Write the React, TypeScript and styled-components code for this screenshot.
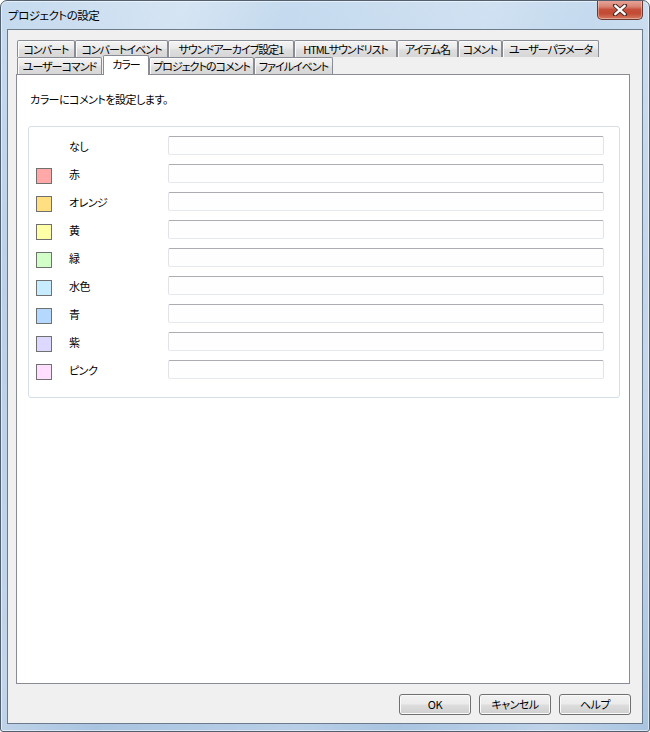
import React from "react";
import styled, { createGlobalStyle } from "styled-components";

const GlobalStyle = createGlobalStyle`
  html, body { margin: 0; padding: 0; background: #ffffff; }
  body {
    font-family: "Noto Sans CJK JP", "Noto Sans", sans-serif;
    font-size: 11px;
    letter-spacing: -0.5px;
    color: #000;
    font-feature-settings: "palt";
  }
  * { box-sizing: border-box; }
`;

const Window = styled.div`
  width: 650px;
  height: 732px;
  border: 1px solid #52606f;
  border-radius: 7px 7px 3px 3px;
  background:
    linear-gradient(105deg, rgba(255,255,255,0) 0%, rgba(255,255,255,0.28) 22%, rgba(255,255,255,0) 34%, rgba(255,255,255,0.18) 58%, rgba(255,255,255,0) 70%, rgba(255,255,255,0.25) 88%, rgba(255,255,255,0) 100%),
    linear-gradient(#c6dbef, #b2cbe6 40%, #a9c4e1);
  box-shadow: inset 0 0 0 1px rgba(255,255,255,0.55);
  display: flex;
  flex-direction: column;
  overflow: hidden;
`;

const TitleBar = styled.div`
  height: 28px;
  display: flex;
  align-items: flex-start;
  justify-content: space-between;
  padding: 0 6px 0 7px;
`;

const Title = styled.div`
  margin-top: 6px;
  font-size: 11.5px;
  line-height: 16px;
  color: #000;
`;

const CloseButton = styled.div`
  width: 46px;
  height: 20px;
  margin-top: -1px;
  border: 1px solid #6b3a33;
  border-top: none;
  border-radius: 0 0 5px 5px;
  background: linear-gradient(#e9a99c 0%, #d88373 35%, #c6503c 50%, #c24a34 70%, #d77a60 100%);
  box-shadow: inset 0 0 0 1px rgba(255,255,255,0.35);
  display: flex;
  align-items: center;
  justify-content: center;
`;

const Client = styled.div`
  flex: 1;
  margin: 0 6px 7px 6px;
  border: 1px solid #6c7b8c;
  background: #f0f0f0;
  display: flex;
  flex-direction: column;
  padding: 10px 11px 8px 8px;
`;

const TabHeader = styled.div`
  display: flex;
  flex-direction: column;
  padding-left: 1px;
  margin-right: 1px;
`;

const TabRow = styled.div`
  display: flex;
  align-items: flex-end;
  height: 17px;
`;

const Tab = styled.div<{ $w: number; $active?: boolean; $gap?: number }>`
  width: ${(p) => p.$w}px;
  margin-left: ${(p) => p.$gap ?? 0}px;
  height: ${(p) => (p.$active ? 20 : 17)}px;
  margin-bottom: ${(p) => (p.$active ? -1 : 0)}px;
  position: relative;
  z-index: ${(p) => (p.$active ? 2 : 0)};
  border: 1px solid #898c95;
  border-bottom: none;
  border-radius: 2px 2px 0 0;
  background: ${(p) =>
    p.$active
      ? "#ffffff"
      : "linear-gradient(#f4f4f4, #eaeaea 45%, #dedede 55%, #d6d6d6)"};
  box-shadow: ${(p) => (p.$active ? "none" : "inset 1px 1px 0 #fbfbfb")};
  display: flex;
  justify-content: center;
  align-items: ${(p) => (p.$active ? "flex-start" : "center")};
  padding-top: ${(p) => (p.$active ? 1 : 0)}px;
  font-size: 11px;
  letter-spacing: -1px;
  line-height: 15px;
  white-space: nowrap;
  overflow: hidden;
  color: #000;
`;

const Pane = styled.div`
  flex: 1;
  margin-right: 1px;
  background: #ffffff;
  border: 1px solid #898c95;
  display: flex;
  flex-direction: column;
  padding: 16px 9px 0 11px;
`;

const Description = styled.div`
  padding-left: 2px;
  line-height: 16px;
  margin-bottom: 19px;
`;

const Group = styled.div`
  border: 1px solid #d5dfe5;
  border-radius: 3px;
  padding: 9px 15px 18px 7px;
  display: flex;
  flex-direction: column;
  gap: 9px;
`;

const ColorRow = styled.div`
  display: flex;
  align-items: center;
  height: 19px;
`;

const Swatch = styled.span<{ $color?: string }>`
  width: 16px;
  height: 16px;
  flex: none;
  align-self: flex-start;
  margin-top: 4px;
  margin-right: 17px;
  background: ${(p) => p.$color ?? "transparent"};
  border: 1px solid ${(p) => (p.$color ? "#707070" : "transparent")};
`;

const Label = styled.span`
  width: 99px;
  flex: none;
  line-height: 16px;
`;

const TextBox = styled.input`
  flex: 1;
  height: 19px;
  min-width: 0;
  border: 1px solid #e2e3ea;
  border-top-color: #abadb3;
  border-bottom-color: #e3e9ef;
  border-radius: 2px;
  background: #fefefe;
  outline: none;
  padding: 0 3px;
  font: inherit;
`;

const ButtonBar = styled.div`
  display: flex;
  justify-content: flex-end;
  gap: 8px;
  margin-top: 10px;
`;

const Button = styled.button`
  width: 72px;
  height: 21px;
  padding: 0;
  border: 1px solid #707070;
  border-radius: 3px;
  background: linear-gradient(#f2f2f2 0%, #ebebeb 48%, #dddddd 52%, #cfcfcf 100%);
  box-shadow: inset 0 0 0 1px #fafafa;
  font-family: "Noto Sans CJK JP", "Noto Sans", sans-serif;
  font-size: 11px;
  letter-spacing: -0.5px;
  font-feature-settings: "palt";
  color: #000;
  line-height: 17px;
`;

const row1 = [
  { t: "コンバート", w: 58 },
  { t: "コンバートイベント", w: 93 },
  { t: "サウンドアーカイブ設定1", w: 126 },
  { t: "HTMLサウンドリスト", w: 103 },
  { t: "アイテム名", w: 61 },
  { t: "コメント", w: 44 },
  { t: "ユーザーパラメータ", w: 97 },
];

const row2 = [
  { t: "ユーザーコマンド", w: 85, gap: 0 },
  { t: "カラー", w: 46, gap: 1, active: true },
  { t: "プロジェクトのコメント", w: 105, gap: 0 },
  { t: "ファイルイベント", w: 79, gap: 0 },
];

const colors: { name: string; color?: string }[] = [
  { name: "なし" },
  { name: "赤", color: "#ffa8a8" },
  { name: "オレンジ", color: "#ffdf80" },
  { name: "黄", color: "#ffffa8" },
  { name: "緑", color: "#d2ffc8" },
  { name: "水色", color: "#c8ecff" },
  { name: "青", color: "#b4d8ff" },
  { name: "紫", color: "#dcd8ff" },
  { name: "ピンク", color: "#ffdeff" },
];

export default function App() {
  return (
    <>
      <GlobalStyle />
      <Window>
        <TitleBar>
          <Title>プロジェクトの設定</Title>
          <CloseButton>
            <svg width="16" height="12" viewBox="0 0 16 12">
              <path d="M3 1.5 L13 10.5 M13 1.5 L3 10.5" stroke="#4a2a26" strokeWidth="4.2" strokeLinecap="round" />
              <path d="M3.3 1.8 L12.7 10.2 M12.7 1.8 L3.3 10.2" stroke="#ffffff" strokeWidth="2.4" strokeLinecap="round" />
            </svg>
          </CloseButton>
        </TitleBar>
        <Client>
          <TabHeader>
            <TabRow>
              {row1.map((t) => (
                <Tab key={t.t} $w={t.w}>
                  {t.t}
                </Tab>
              ))}
            </TabRow>
            <TabRow>
              {row2.map((t) => (
                <Tab key={t.t} $w={t.w} $gap={t.gap} $active={t.active}>
                  {t.t}
                </Tab>
              ))}
            </TabRow>
          </TabHeader>
          <Pane>
            <Description>カラーにコメントを設定します。</Description>
            <Group>
              {colors.map((c) => (
                <ColorRow key={c.name}>
                  <Swatch $color={c.color} />
                  <Label>{c.name}</Label>
                  <TextBox type="text" defaultValue="" />
                </ColorRow>
              ))}
            </Group>
          </Pane>
          <ButtonBar>
            <Button>OK</Button>
            <Button>キャンセル</Button>
            <Button>ヘルプ</Button>
          </ButtonBar>
        </Client>
      </Window>
    </>
  );
}
